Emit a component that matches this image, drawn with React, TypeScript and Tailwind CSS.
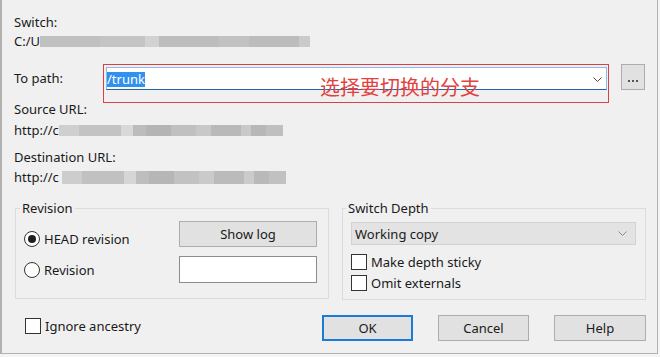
import React from "react";

type Seg = { w: number; c: string };

const Bar = ({ segs, h = 11, ml = 0 }: { segs: Seg[]; h?: number; ml?: number }) => (
  <div className="flex blur-[0.5px] relative" style={{ height: h, marginLeft: ml }}>
    {segs.map((s, i) => (
      <div key={i} style={{ width: s.w, background: s.c }} />
    ))}
  </div>
);

const Radio = ({ checked }: { checked?: boolean }) => (
  <span className="w-[16px] h-[16px] rounded-full border border-[#333333] bg-white flex items-center justify-center shrink-0">
    {checked && <span className="w-[8px] h-[8px] rounded-full bg-[#1f1f1f]" />}
  </span>
);

const Check = () => (
  <span className="w-[16px] h-[16px] border border-[#333333] bg-white shrink-0" />
);

const Btn = ({ label, def, w = 91 }: { label: string; def?: boolean; w?: number }) => (
  <div
    className={
      "h-[26px] flex items-center justify-center bg-[#e1e1e1] " +
      (def ? "border-2 border-[#1a7bd6]" : "border border-[#adadad]")
    }
    style={{ width: w }}
  >
    {label}
  </div>
);

export default function App() {
  const bar1: Seg[] = [
    { w: 60, c: "#c0c0c0" },
    { w: 45, c: "#c4c4c4" },
    { w: 14, c: "#d2d2d2" },
    { w: 60, c: "#bdbdbd" },
    { w: 30, c: "#c2c2c2" },
    { w: 50, c: "#bcbcbc" },
    { w: 11, c: "#cacaca" },
  ];
  const bar2: Seg[] = [
    { w: 20, c: "#cfcfcf" },
    { w: 42, c: "#c3c3c3" },
    { w: 12, c: "#d8d8d8" },
    { w: 13, c: "#bcbcbc" },
    { w: 25, c: "#b4b4b4" },
    { w: 25, c: "#c0c0c0" },
    { w: 15, c: "#c8c8c8" },
    { w: 30, c: "#b9b9b9" },
    { w: 10, c: "#c9c9c9" },
    { w: 15, c: "#b7b7b7" },
    { w: 17, c: "#bfbfbf" },
  ];
  const bar3: Seg[] = [
    { w: 20, c: "#cdcdcd" },
    { w: 42, c: "#c1c1c1" },
    { w: 12, c: "#d6d6d6" },
    { w: 13, c: "#bebebe" },
    { w: 25, c: "#b6b6b6" },
    { w: 25, c: "#c2c2c2" },
    { w: 15, c: "#cacaca" },
    { w: 30, c: "#bbbbbb" },
    { w: 10, c: "#cbcbcb" },
    { w: 15, c: "#b9b9b9" },
    { w: 17, c: "#c1c1c1" },
  ];

  return (
    <div className="w-[660px] h-[357px] bg-[#f4f4f4] overflow-hidden font-['Noto_Sans',sans-serif] text-[13px] leading-[16px] text-[#1a1a1a]">
      <div className="w-[658px] h-[354px] bg-[#f0f0f0] border-l-2 border-r border-b border-[#b2b2b2] flex flex-col pl-[12px]">
        {/* Switch */}
        <div className="mt-[14px] h-[16px]">Switch:</div>
        <div className="mt-[3px] h-[16px] flex items-center">
          <span className="whitespace-nowrap">C:/U</span>
          <Bar segs={bar1} ml={0} />
        </div>

        {/* To path */}
        <div className="mt-[15px] flex items-start h-[39px]">
          <div className="w-[89px] pt-[6px]">To path:</div>
          <div className="relative w-[506px] h-[39px] border border-[#d8404a]">
            <div className="mt-[2px] ml-[2px] w-[501px] h-[23px] bg-white border border-[#8dbbe8] border-b-[#2467a8] flex items-start">
              <span className="mt-[4px] h-[15px] w-[38px] bg-[#3391ee] text-white flex items-center leading-[15px]">
                /trunk
              </span>
              <svg className="ml-auto mr-[4px] mt-[9px]" width="9" height="5" viewBox="0 0 9 5">
                <path d="M0.5 0.5 L4.5 4.5 L8.5 0.5" fill="none" stroke="#4a4a4a" strokeWidth="1" />
              </svg>
            </div>
            <div className="absolute left-[216px] top-[12px] text-[20px] leading-[20px] text-[#e2413f] font-['Noto_Sans_CJK_SC',sans-serif] whitespace-nowrap">
              选择要切换的分支
            </div>
          </div>
          <div className="ml-[12px] w-[24px] h-[26px] bg-[#e1e1e1] border border-[#adadad] flex items-end justify-center gap-[2px] pb-[7px]">
            <span className="w-[2px] h-[2px] bg-[#555555]" />
            <span className="w-[2px] h-[2px] bg-[#555555]" />
            <span className="w-[2px] h-[2px] bg-[#555555]" />
          </div>
        </div>

        {/* URLs */}
        <div className="mt-[-2px] h-[16px]">Source URL:</div>
        <div className="mt-[5px] h-[16px] flex items-center">
          <span className="whitespace-nowrap">http://cc</span>
          <Bar segs={bar2} ml={-6} />
        </div>
        <div className="mt-[11px] h-[16px]">Destination URL:</div>
        <div className="mt-[4px] h-[16px] flex items-center">
          <span className="whitespace-nowrap">http://c</span>
          <Bar segs={bar3} h={13} ml={3} />
        </div>

        {/* Groups */}
        <div className="mt-[15px] flex items-start">
          <fieldset className="ml-[1px] w-[314px] h-[99px] border border-[#dcdcdc]">
            <legend className="ml-[4px] px-[2px] leading-[16px]">Revision</legend>
            <div className="flex">
              <div className="pl-[8px] flex flex-col">
                <div className="mt-[15px] h-[16px] flex items-center gap-[4px]">
                  <Radio checked />
                  <span>HEAD revision</span>
                </div>
                <div className="mt-[15px] h-[16px] flex items-center gap-[4px]">
                  <Radio />
                  <span>Revision</span>
                </div>
              </div>
              <div className="ml-auto mr-[11px] flex flex-col">
                <div className="mt-[5px]">
                  <Btn label="Show log" w={138} />
                </div>
                <div className="mt-[9px] w-[138px] h-[27px] bg-white border border-[#8c8c8c]" />
              </div>
            </div>
          </fieldset>
          <fieldset className="ml-[13px] w-[304px] h-[100px] border border-[#dcdcdc]">
            <legend className="ml-[3px] px-[2px] leading-[16px]">Switch Depth</legend>
            <div className="ml-[8px] mt-[6px] w-[285px] h-[23px] bg-[#e3e3e3] border border-[#d2d2d2] flex items-center pl-[3px]">
              <span>Working copy</span>
              <svg className="ml-auto mr-[8px]" width="9" height="5" viewBox="0 0 9 5">
                <path d="M0.5 0.5 L4.5 4.5 L8.5 0.5" fill="none" stroke="#8a8a8a" strokeWidth="1" />
              </svg>
            </div>
            <div className="ml-[8px] mt-[9px] h-[16px] flex items-center gap-[4px]">
              <Check />
              <span>Make depth sticky</span>
            </div>
            <div className="ml-[8px] mt-[5px] h-[16px] flex items-center gap-[4px]">
              <Check />
              <span>Omit externals</span>
            </div>
          </fieldset>
        </div>

        {/* Bottom */}
        <div className="mt-[15px] flex items-start">
          <div className="ml-[11px] mt-[3px] h-[16px] flex items-center gap-[4px]">
            <Check />
            <span>Ignore ancestry</span>
          </div>
          <div className="ml-auto mr-[11px] flex gap-[25px]">
            <Btn label="OK" def />
            <Btn label="Cancel" />
            <Btn label="Help" w={92} />
          </div>
        </div>
      </div>
    </div>
  );
}
